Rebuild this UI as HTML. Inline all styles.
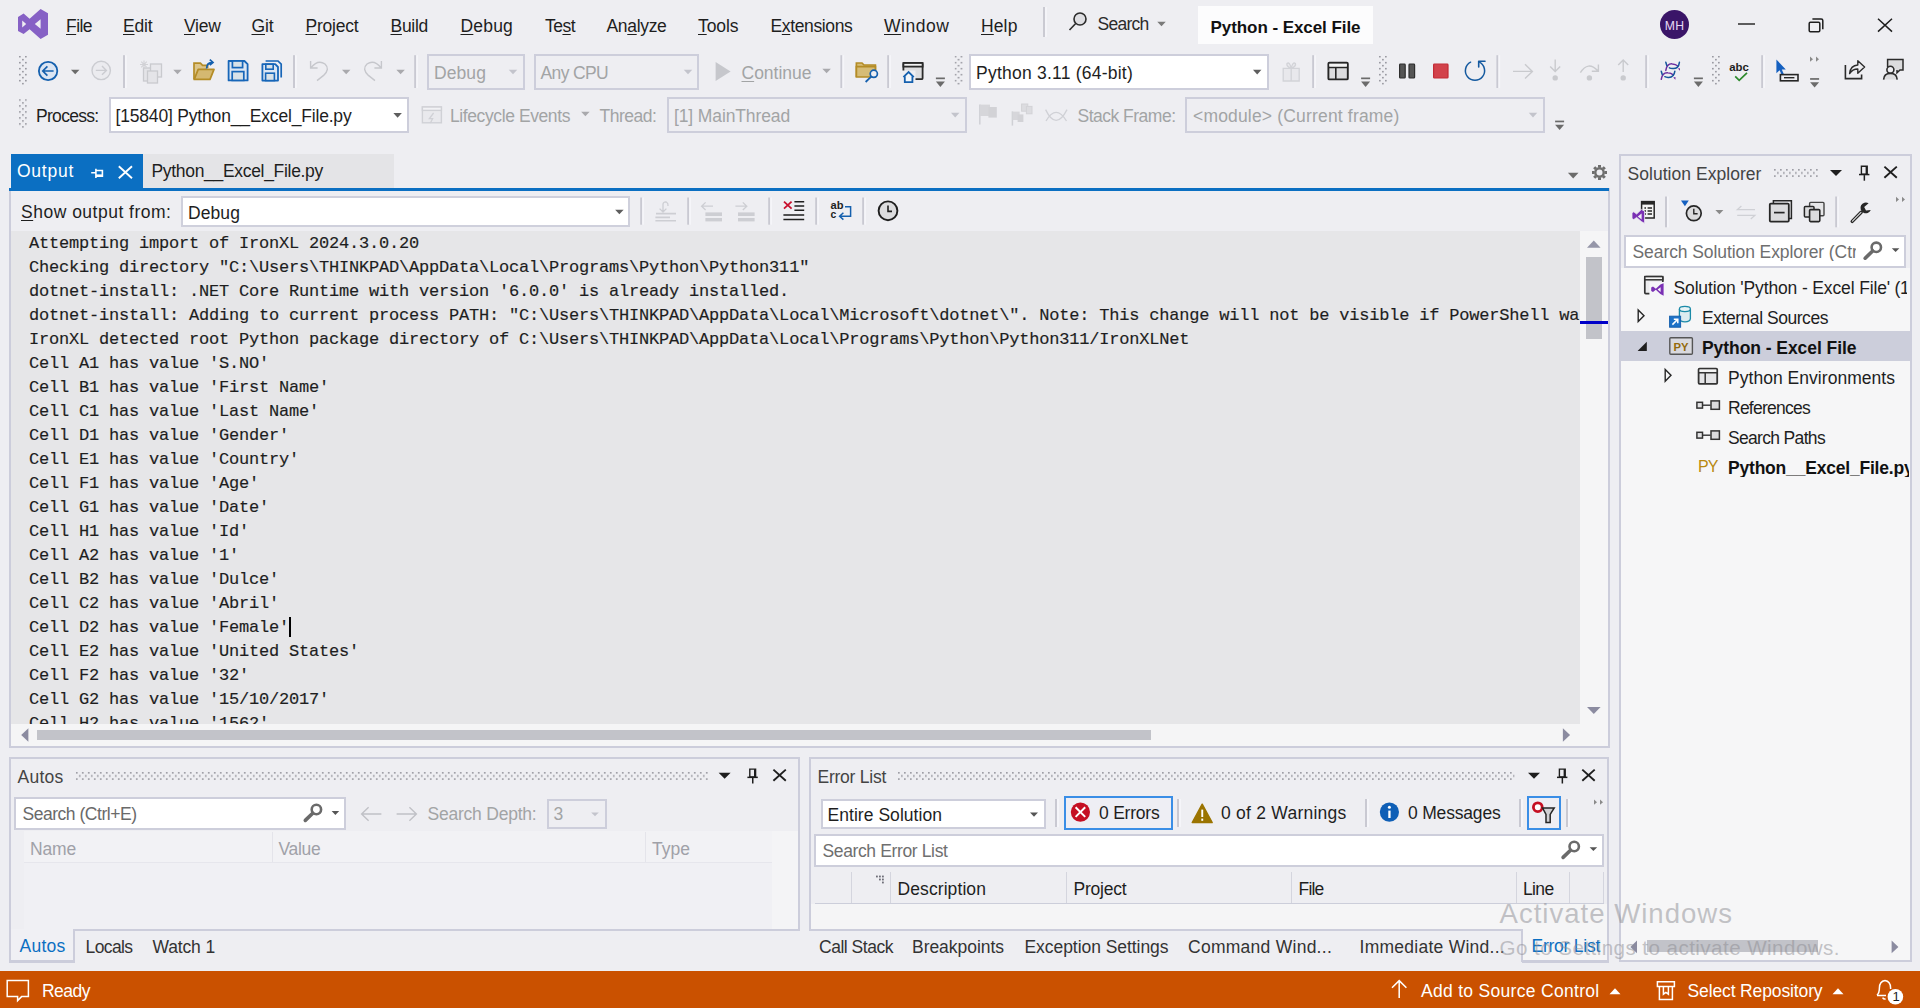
<!DOCTYPE html>
<html lang="en"><head><meta charset="utf-8"><title>Python - Excel File - Microsoft Visual Studio</title>
<style>
html,body{margin:0;padding:0;}
body{width:1920px;height:1008px;overflow:hidden;background:#eeeef2;position:relative;font-family:"Liberation Sans", sans-serif;}
.b{position:absolute;box-sizing:border-box;display:block;}
.t{position:absolute;white-space:pre;line-height:1;font-kerning:normal;}
u{text-decoration:underline;text-underline-offset:2px;text-decoration-thickness:1px;}
</style></head><body>
<div class="b" style="left:1043px;top:7px;width:2px;height:30px;background:#cacad2;"></div>
<div class="b" style="left:1045px;top:7px;width:2px;height:30px;background:#f4f4f8;"></div>
<div class="b" style="left:1198px;top:6px;width:175px;height:38px;background:#fcfcfd;"></div>
<div class="b" style="left:1659.8px;top:9.5px;width:29.6px;height:29.6px;border-radius:15px;background:#3a1568;"></div>
<div class="b" style="left:427px;top:54px;width:98px;height:36px;background:#eeeef2;border:2px solid #cdcedb;"></div>
<div class="b" style="left:534px;top:54px;width:165px;height:36px;background:#eeeef2;border:2px solid #cdcedb;"></div>
<div class="b" style="left:969px;top:54px;width:300px;height:36px;background:#fff;border:2px solid #cdcedb;"></div>
<div class="b" style="left:109px;top:97px;width:300px;height:36px;background:#fff;border:2px solid #cdcedb;"></div>
<div class="b" style="left:667px;top:97px;width:300px;height:36px;background:#eeeef2;border:2px solid #cdcedb;"></div>
<div class="b" style="left:1185px;top:97px;width:360px;height:36px;background:#eeeef2;border:2px solid #cdcedb;"></div>
<div class="b" style="left:9px;top:188px;width:1601px;height:560px;background:#eeeef2;border:2px solid #cccddb;"></div>
<div class="b" style="left:11px;top:154px;width:132px;height:35px;background:#0b6fc2;"></div>
<div class="b" style="left:143px;top:154px;width:251px;height:34px;background:#e4e4e7;"></div>
<div class="b" style="left:9px;top:188px;width:1600px;height:3px;background:#0b6fc2;"></div>
<div class="b" style="left:181px;top:196px;width:449px;height:31px;background:#fff;border:2px solid #cfd0dc;"></div>
<div class="b" style="left:11px;top:231px;width:1569px;height:493px;background:#e6e6e8;"></div>
<div class="b" style="left:11px;top:231px;width:1569px;height:493px;overflow:hidden;"><div style="position:absolute;left:18px;top:1px;font-family:'Liberation Mono', monospace;font-size:17px;letter-spacing:-0.2px;-webkit-text-stroke:0.16px #1e1e1e;line-height:24px;white-space:pre;color:#1e1e1e;"><div style="height:24px;">Attempting import of IronXL 2024.3.0.20</div><div style="height:24px;">Checking directory "C:\Users\THINKPAD\AppData\Local\Programs\Python\Python311"</div><div style="height:24px;">dotnet-install: .NET Core Runtime with version '6.0.0' is already installed.</div><div style="height:24px;">dotnet-install: Adding to current process PATH: "C:\Users\THINKPAD\AppData\Local\Microsoft\dotnet\". Note: This change will not be visible if PowerShell wa</div><div style="height:24px;">IronXL detected root Python package directory of C:\Users\THINKPAD\AppData\Local\Programs\Python\Python311/IronXLNet</div><div style="height:24px;">Cell A1 has value 'S.NO'</div><div style="height:24px;">Cell B1 has value 'First Name'</div><div style="height:24px;">Cell C1 has value 'Last Name'</div><div style="height:24px;">Cell D1 has value 'Gender'</div><div style="height:24px;">Cell E1 has value 'Country'</div><div style="height:24px;">Cell F1 has value 'Age'</div><div style="height:24px;">Cell G1 has value 'Date'</div><div style="height:24px;">Cell H1 has value 'Id'</div><div style="height:24px;">Cell A2 has value '1'</div><div style="height:24px;">Cell B2 has value 'Dulce'</div><div style="height:24px;">Cell C2 has value 'Abril'</div><div style="height:24px;">Cell D2 has value 'Female'</div><div style="height:24px;">Cell E2 has value 'United States'</div><div style="height:24px;">Cell F2 has value '32'</div><div style="height:24px;">Cell G2 has value '15/10/2017'</div><div style="height:24px;">Cell H2 has value '1562'</div></div></div>
<div class="b" style="left:289px;top:617px;width:1.5px;height:20px;background:#000;"></div>
<div class="b" style="left:1580px;top:231px;width:28px;height:493px;background:#f5f5f6;"></div>
<div class="b" style="left:1586px;top:257px;width:16px;height:82px;background:#c2c3c9;"></div>
<div class="b" style="left:1580px;top:321px;width:28px;height:3px;background:#0000c8;"></div>
<div class="b" style="left:11px;top:724px;width:1597px;height:22px;background:#f5f5f6;"></div>
<div class="b" style="left:37px;top:730px;width:1114px;height:10px;background:#c2c3c9;"></div>
<div class="b" style="left:9px;top:757px;width:791px;height:206px;border:2px solid #cccddb;"></div>
<div class="b" style="left:11px;top:831px;width:787px;height:98px;background:#f0f0f4;"></div>
<div class="b" style="left:9px;top:929px;width:791px;height:2px;background:#cccddb;"></div>
<div class="b" style="left:14px;top:797px;width:332px;height:33px;background:#fff;border:2px solid #cdcedb;"></div>
<div class="b" style="left:547px;top:799px;width:60px;height:30px;background:#eeeef2;border:2px solid #cdcedb;"></div>
<div class="b" style="left:11px;top:831px;width:13px;height:98px;background:#eeeef2;"></div>
<div class="b" style="left:24px;top:831px;width:748px;height:31px;background:#f2f2f5;"></div>
<div class="b" style="left:24px;top:862px;width:748px;height:1px;background:#e6e6ec;"></div>
<div class="b" style="left:272px;top:832px;width:1px;height:30px;background:#e4e4ea;"></div>
<div class="b" style="left:645px;top:832px;width:1px;height:30px;background:#e4e4ea;"></div>
<div class="b" style="left:772px;top:831px;width:26px;height:98px;background:#f4f4f6;"></div>
<div class="b" style="left:75px;top:931px;width:727px;height:33px;background:#eeeef2;"></div>
<div class="b" style="left:798px;top:931px;width:3px;height:33px;background:#eeeef2;"></div>
<div class="b" style="left:9px;top:929px;width:66px;height:33px;background:#f0f0f4;border:2px solid #cccddb;border-top:none;"></div>
<div class="b" style="left:809px;top:757px;width:800px;height:206px;border:2px solid #cccddb;"></div>
<div class="b" style="left:811px;top:904px;width:796px;height:25px;background:#f5f5f6;"></div>
<div class="b" style="left:809px;top:929px;width:800px;height:2px;background:#cccddb;"></div>
<div class="b" style="left:821px;top:799px;width:225px;height:30px;background:#fff;border:2px solid #cdcedb;"></div>
<div class="b" style="left:1055px;top:799px;width:2px;height:28px;background:#c9c9d2;"></div>
<div class="b" style="left:1057px;top:799px;width:2px;height:28px;background:#f5f5f9;"></div>
<div class="b" style="left:1064px;top:796px;width:109px;height:34px;background:#eeeef4;border:2px solid #3a8ee6;"></div>
<div class="b" style="left:1177px;top:799px;width:2px;height:28px;background:#c9c9d2;"></div>
<div class="b" style="left:1179px;top:799px;width:2px;height:28px;background:#f5f5f9;"></div>
<div class="b" style="left:1365px;top:799px;width:2px;height:28px;background:#c9c9d2;"></div>
<div class="b" style="left:1367px;top:799px;width:2px;height:28px;background:#f5f5f9;"></div>
<div class="b" style="left:1519px;top:799px;width:2px;height:28px;background:#c9c9d2;"></div>
<div class="b" style="left:1521px;top:799px;width:2px;height:28px;background:#f5f5f9;"></div>
<div class="b" style="left:1527px;top:796px;width:34px;height:34px;background:#eeeef4;border:2px solid #3a8ee6;"></div>
<div class="b" style="left:1566px;top:799px;width:2px;height:28px;background:#c9c9d2;"></div>
<div class="b" style="left:1568px;top:799px;width:2px;height:28px;background:#f5f5f9;"></div>
<div class="b" style="left:814px;top:834px;width:790px;height:33px;background:#fff;border:2px solid #cdcedb;"></div>
<div class="b" style="left:815px;top:903px;width:789px;height:1px;background:#ccceda;"></div>
<div class="b" style="left:851px;top:872px;width:1px;height:31px;background:#d4d5de;"></div>
<div class="b" style="left:890px;top:872px;width:1px;height:31px;background:#d4d5de;"></div>
<div class="b" style="left:1066px;top:872px;width:1px;height:31px;background:#d4d5de;"></div>
<div class="b" style="left:1291px;top:872px;width:1px;height:31px;background:#d4d5de;"></div>
<div class="b" style="left:1516px;top:872px;width:1px;height:31px;background:#d4d5de;"></div>
<div class="b" style="left:1569px;top:872px;width:1px;height:31px;background:#d4d5de;"></div>
<div class="b" style="left:1603px;top:872px;width:1px;height:31px;background:#d4d5de;"></div>
<div class="b" style="left:808px;top:931px;width:714px;height:33px;background:#eeeef2;"></div>
<div class="b" style="left:1521px;top:929px;width:88px;height:33px;background:#f5f5f6;border:2px solid #cccddb;border-top:none;"></div>
<div class="b" style="left:1521px;top:929px;width:2px;height:2px;background:#cccddb;"></div>
<div class="b" style="left:1619px;top:154px;width:293px;height:808px;background:#f6f6f7;border:2px solid #cccddb;"></div>
<div class="b" style="left:1621px;top:156px;width:289px;height:112px;background:#eeeef2;"></div>
<div class="b" style="left:1624px;top:235px;width:282px;height:33px;background:#fff;border:2px solid #cdcedb;"></div>
<div class="b" style="left:1621px;top:331px;width:289px;height:30px;background:#cccedb;"></div>
<div class="b" style="left:1647px;top:940px;width:171px;height:12px;background:#c2c3c9;"></div>
<div class="b" style="left:0px;top:971px;width:1920px;height:37px;background:#ca5100;"></div>
<svg class="b" style="left:0;top:0;" width="1920" height="1008" viewBox="0 0 1920 1008"><defs><pattern id="g0" width="6" height="6" patternUnits="userSpaceOnUse" x="19" y="55.9"><rect x="0" y="0" width="1.7" height="1.5" fill="#96969e"/><rect x="3.05" y="3" width="1.7" height="1.5" fill="#96969e"/></pattern><pattern id="g1" width="6" height="6" patternUnits="userSpaceOnUse" x="954.6" y="55.9"><rect x="0" y="0" width="1.7" height="1.5" fill="#96969e"/><rect x="3.05" y="3" width="1.7" height="1.5" fill="#96969e"/></pattern><pattern id="g2" width="6" height="6" patternUnits="userSpaceOnUse" x="1379" y="55.9"><rect x="0" y="0" width="1.7" height="1.5" fill="#96969e"/><rect x="3.05" y="3" width="1.7" height="1.5" fill="#96969e"/></pattern><pattern id="g3" width="6" height="6" patternUnits="userSpaceOnUse" x="1712" y="55.9"><rect x="0" y="0" width="1.7" height="1.5" fill="#96969e"/><rect x="3.05" y="3" width="1.7" height="1.5" fill="#96969e"/></pattern><pattern id="g4" width="6" height="6" patternUnits="userSpaceOnUse" x="19" y="99.2"><rect x="0" y="0" width="1.7" height="1.5" fill="#96969e"/><rect x="3.05" y="3" width="1.7" height="1.5" fill="#96969e"/></pattern><pattern id="g5" width="6" height="6.4" patternUnits="userSpaceOnUse" x="75.9" y="771.9"><rect x="0" y="0" width="1.7" height="1.7" fill="#9c9ca4"/><rect x="3" y="3.2" width="1.7" height="1.7" fill="#9c9ca4"/></pattern><pattern id="g6" width="6" height="6.4" patternUnits="userSpaceOnUse" x="898" y="771.9"><rect x="0" y="0" width="1.7" height="1.7" fill="#9c9ca4"/><rect x="3" y="3.2" width="1.7" height="1.7" fill="#9c9ca4"/></pattern><pattern id="g7" width="6" height="6.4" patternUnits="userSpaceOnUse" x="1774" y="168.9"><rect x="0" y="0" width="1.7" height="1.7" fill="#9c9ca4"/><rect x="3" y="3.2" width="1.7" height="1.7" fill="#9c9ca4"/></pattern></defs>
<path d="M40.6 9L48 13.2V34.8L40.6 39L29.6 29.2L23.6 34L18 31V17L23.6 13.6L29.6 18.8Z" fill="#8661c5" />
<path d="M40.6 19.2V28.8L34.8 24Z M22.2 20.6V27.6L26.2 24Z" fill="#eeeef2" />
<circle cx="1080" cy="19" r="6" fill="#dedee2" stroke="#2b2b2b" stroke-width="1.6"/>
<path d="M1075.7 23.5L1069.5 30" fill="none" stroke="#2b2b2b" stroke-width="1.6" />
<path d="M1157.25 21.7H1165.75L1161.5 26.3Z" fill="#7a7a7a" />
<rect x="1738" y="23.3" width="17" height="1.4" fill="#1e1e1e" />
<rect x="1809.2" y="22.2" width="10.6" height="9.6" fill="none" stroke="#1e1e1e" stroke-width="1.5" rx="1.2" />
<path d="M1812.4 19.0H1821.2Q1822.8 19.0 1822.8 20.6V29.2" fill="none" stroke="#1e1e1e" stroke-width="1.5" />
<path d="M1878 18.8L1892 31.6M1892 18.8L1878 31.6" fill="none" stroke="#1e1e1e" stroke-width="1.5" />
<rect x="19" y="55.9" width="8.2" height="29" fill="url(#g0)" />
<circle cx="48.1" cy="71" r="9.2" fill="#dbe5f3" stroke="#1560ae" stroke-width="1.8"/>
<path d="M53.6 71H43.2M47.4 66.4L42.8 71L47.4 75.6" fill="none" stroke="#1560ae" stroke-width="1.7" />
<path d="M70.95 69.65H79.45L75.2 74.35Z" fill="#6b6b6b" />
<circle cx="101.2" cy="70.4" r="9.2" fill="#ebebef" stroke="#cbccd1" stroke-width="1.4"/>
<path d="M95.8 70.4H106M102 66L106.4 70.4L102 74.8" fill="none" stroke="#cbccd1" stroke-width="1.4" />
<rect x="123.0" y="55.2" width="2" height="32.8" fill="#c9c9d2" />
<rect x="125.0" y="55.2" width="1.8" height="32.8" fill="#f5f5f9" />
<rect x="143.5" y="68" width="10" height="13" fill="#e4e4e8" stroke="#c9cace" stroke-width="1.3" />
<rect x="150.5" y="64" width="11" height="13" fill="#e8e8ec" stroke="#c9cace" stroke-width="1.3" />
<rect x="147.5" y="71" width="10" height="12" fill="#e4e4e8" stroke="#c9cace" stroke-width="1.3" />
<path d="M144 60.5V68.5M140 64.5H148M141.2 61.7L146.8 67.3M146.8 61.7L141.2 67.3" fill="none" stroke="#d2d2d6" stroke-width="1.1" />
<path d="M173.25 69.65H181.75L177.5 74.35Z" fill="#a9a9ad" />
<path d="M194 79.2V63.2H200.4L202.6 65.4H207.6V68" fill="#dcc58a" stroke="#b48c26" stroke-width="1.7" />
<path d="M194.2 79.4L198.2 69.4H214L210 79.4Z" fill="#d4b871" stroke="#b48c26" stroke-width="1.7" stroke-linejoin="round"/>
<path d="M206.6 68.4Q206.6 62.6 212.6 62.4M209.8 59.6L213 62.4L209.8 65.2" fill="none" stroke="#1560ae" stroke-width="1.7" />
<path d="M228.6 61H244.4L247.6 64.2V80.4H228.6Z" fill="#dbe6f4" stroke="#1766b8" stroke-width="1.8" stroke-linejoin="round"/>
<rect x="232.4" y="61" width="10.2" height="6.6" fill="#d9e2e8" stroke="#1766b8" stroke-width="1.7" />
<rect x="232.2" y="71.6" width="11.6" height="8.8" fill="#d9e2e8" stroke="#1766b8" stroke-width="1.7" />
<path d="M265.6 61H278L281.2 64.2V77.6" fill="none" stroke="#1766b8" stroke-width="1.7" />
<path d="M262.4 64.2H275.2L278 67V80.6H262.4Z" fill="#dbe6f4" stroke="#1766b8" stroke-width="1.8" stroke-linejoin="round"/>
<rect x="265.8" y="64.2" width="7.4" height="5" fill="#d9e2e8" stroke="#1766b8" stroke-width="1.6" />
<rect x="265.6" y="73.2" width="8.8" height="7.4" fill="#d9e2e8" stroke="#1766b8" stroke-width="1.6" />
<rect x="293.0" y="55.2" width="2" height="32.8" fill="#c9c9d2" />
<rect x="295.0" y="55.2" width="1.8" height="32.8" fill="#f5f5f9" />
<path d="M310.6 61V68H317.6M311 67.6Q318 59 325 64Q330.4 69 323.6 75.4L317 80.6" fill="none" stroke="#c6c7cc" stroke-width="1.4" />
<path d="M341.95 69.65H350.45L346.2 74.35Z" fill="#a9a9ad" />
<path d="M381.4 61V68H374.4M381 67.6Q374 59 367 64Q361.6 69 368.4 75.4L375 80.6" fill="none" stroke="#c6c7cc" stroke-width="1.4" />
<path d="M396.35 69.65H404.85L400.6 74.35Z" fill="#a9a9ad" />
<rect x="414.2" y="55.2" width="2" height="32.8" fill="#c9c9d2" />
<rect x="416.2" y="55.2" width="1.8" height="32.8" fill="#f5f5f9" />
<path d="M508.75 69.65H517.25L513 74.35Z" fill="#c3c4cc" />
<path d="M683.75 69.65H692.25L688 74.35Z" fill="#c3c4cc" />
<path d="M715.6 62L730.6 71.5L715.6 81Z" fill="#c6c7cc" />
<path d="M822.35 68.65H830.85L826.6 73.35Z" fill="#a9a9ad" />
<rect x="840.4000000000001" y="55.2" width="2" height="32.8" fill="#c9c9d2" />
<rect x="842.4000000000001" y="55.2" width="1.8" height="32.8" fill="#f5f5f9" />
<path d="M856.4 77V63H862L864 65H875.4V70" fill="#d6bc76" stroke="#b48c26" stroke-width="1.7" />
<path d="M856.4 66.6H875.4V77H856.4Z" fill="#d6bc76" stroke="#b48c26" stroke-width="1.7" />
<circle cx="873.8" cy="73.8" r="3.6" fill="#eeeef2" stroke="#1560ae" stroke-width="1.7"/>
<path d="M871.2 76.6L865.6 82" fill="none" stroke="#1560ae" stroke-width="1.8" />
<rect x="887.2" y="55.2" width="2" height="32.8" fill="#c9c9d2" />
<rect x="889.2" y="55.2" width="1.8" height="32.8" fill="#f5f5f9" />
<rect x="903.4" y="63" width="19.2" height="16.2" fill="#dedee0" stroke="#2b2b2b" stroke-width="1.8" rx="1" />
<rect x="903.4" y="63" width="19.2" height="3.6" fill="#f4f4f4" stroke="#2b2b2b" stroke-width="1.8" />
<rect x="901.5" y="70.5" width="14" height="13.5" fill="#eeeef2" />
<path d="M903.4 77.2L908.6 72L913.8 77.2M904.8 76.4V82.2H912.4V76.4" fill="#f4f8fc" stroke="#1560ae" stroke-width="1.8" />
<rect x="935.9" y="77.5" width="9" height="1.7" fill="#6b6b6b" />
<path d="M935.9 81.6H944.9L940.4 86.89999999999999Z" fill="#6b6b6b" />
<rect x="954.6" y="55.9" width="8.2" height="29" fill="url(#g1)" />
<path d="M1252.95 69.85000000000001H1261.45L1257.2 74.55Z" fill="#5e5e5e" />
<path d="M1283.2 68.4H1299.2V81H1283.2ZM1291.2 68.4V81M1291.2 68.2Q1286 66.4 1287 63.4Q1289.6 61.4 1291.2 68.2Q1292.8 61.4 1295.4 63.4Q1296.4 66.4 1291.2 68.2" fill="#e8e8ec" stroke="#d2d3d8" stroke-width="1.3" />
<rect x="1312.2" y="55.2" width="2" height="32.8" fill="#c9c9d2" />
<rect x="1314.2" y="55.2" width="1.8" height="32.8" fill="#f5f5f9" />
<rect x="1328.4" y="62.8" width="19.4" height="16.6" fill="#dcdcde" stroke="#262626" stroke-width="1.9" rx="1" />
<path d="M1328.4 67.4H1347.8M1335.8 67.4V79.4" fill="none" stroke="#262626" stroke-width="1.6" />
<rect x="1329.4" y="63.8" width="17.4" height="2.8" fill="#f4f4f4" />
<rect x="1361.1" y="77.5" width="9" height="1.7" fill="#6b6b6b" />
<path d="M1361.1 81.6H1370.1L1365.6 86.89999999999999Z" fill="#6b6b6b" />
<rect x="1379" y="55.9" width="8.2" height="29" fill="url(#g2)" />
<rect x="1399.6" y="64.2" width="5.6" height="13.8" fill="#555" stroke="#2e2e2e" stroke-width="1.2" rx="0.8" />
<rect x="1409" y="64.2" width="5.6" height="13.8" fill="#555" stroke="#2e2e2e" stroke-width="1.2" rx="0.8" />
<rect x="1433.6" y="64.2" width="14.4" height="13.8" fill="#d2424b" stroke="#c32a35" stroke-width="1.2" rx="0.8" />
<path d="M1470.6 62.2A9.6 9.6 0 1 0 1479.4 62.2" fill="none" stroke="#14599f" stroke-width="1.5" stroke-linecap="round"/>
<path d="M1485 61.3H1478.7V67" fill="none" stroke="#14599f" stroke-width="1.6" stroke-linecap="round" stroke-linejoin="round"/>
<rect x="1496.4" y="55.2" width="2" height="32.8" fill="#c9c9d2" />
<rect x="1498.4" y="55.2" width="1.8" height="32.8" fill="#f5f5f9" />
<path d="M1513 71.4H1532M1525 64.2L1532.4 71.4L1525 78.6" fill="none" stroke="#c9cace" stroke-width="1.4" />
<path d="M1555.2 59.4V71.2M1550.2 66.4L1555.2 71.4L1560.2 66.4" fill="none" stroke="#c9cace" stroke-width="1.4" />
<circle cx="1555.2" cy="77.9" r="2.7" fill="#c9cace"/>
<path d="M1580.4 72.6Q1588 60.6 1597.6 70.6M1598.4 64.6V71.2H1591.8" fill="none" stroke="#c9cace" stroke-width="1.4" />
<circle cx="1589.4" cy="77.9" r="2.7" fill="#c9cace"/>
<path d="M1623.2 72V60.2M1618.2 65L1623.2 60L1628.2 65" fill="none" stroke="#c9cace" stroke-width="1.4" />
<circle cx="1623.2" cy="77.9" r="2.7" fill="#c9cace"/>
<rect x="1645.2" y="55.2" width="2" height="32.8" fill="#c9c9d2" />
<rect x="1647.2" y="55.2" width="1.8" height="32.8" fill="#f5f5f9" />
<g transform="translate(0 0)">
<path d="M1665.8 70.4Q1667 63.4 1672.4 63.9Q1675.6 64.1 1677.8 66" fill="none" stroke="#6b2fa0" stroke-width="1.5" stroke-linecap="round"/>
<path d="M1665.8 62.3L1666.8 65.6M1679.4 62.3Q1678.6 68.9 1672.6 68.5Q1670.6 68.4 1669.4 67.8" fill="none" stroke="#15559c" stroke-width="1.5" stroke-linecap="round"/>
<path d="M1677.8 68.6L1680 68.2L1680 70.8Z" fill="#6b2fa0" />
</g>
<g transform="translate(-4.55 8.9)">
<path d="M1665.8 70.4Q1667 63.4 1672.4 63.9Q1675.6 64.1 1677.8 66" fill="none" stroke="#6b2fa0" stroke-width="1.5" stroke-linecap="round"/>
<path d="M1665.8 62.3L1666.8 65.6M1679.4 62.3Q1678.6 68.9 1672.6 68.5Q1670.6 68.4 1669.4 67.8" fill="none" stroke="#15559c" stroke-width="1.5" stroke-linecap="round"/>
<path d="M1677.8 68.6L1680 68.2L1680 70.8Z" fill="#6b2fa0" />
</g>
<rect x="1693.9" y="77.5" width="9" height="1.7" fill="#6b6b6b" />
<path d="M1693.9 81.6H1702.9L1698.4 86.89999999999999Z" fill="#6b6b6b" />
<rect x="1712" y="55.9" width="8.2" height="29" fill="url(#g3)" />
<text x="1729.2" y="70.8" font-family="Liberation Sans, sans-serif" font-weight="700" font-size="10.8" fill="#1e1e1e" textLength="19.6" lengthAdjust="spacingAndGlyphs">abc</text>
<path d="M1735.2 76.4L1739.2 80.4L1747 72.8" fill="none" stroke="#2d8a2d" stroke-width="1.7" />
<rect x="1761.2" y="55.2" width="2" height="32.8" fill="#c9c9d2" />
<rect x="1763.2" y="55.2" width="1.8" height="32.8" fill="#f5f5f9" />
<path d="M1776.4 59.6V73.2L1779.6 70.2L1782 75.4L1784 74.4L1781.8 69.4H1785.8Z" fill="#1560c0" />
<rect x="1780.4" y="74.6" width="17.6" height="6.2" fill="#eeeef2" stroke="#262626" stroke-width="1.6" />
<rect x="1784" y="77" width="10.4" height="1.4" fill="#262626" />
<path d="M1810 56.6L1813 59.2L1810 61.800000000000004Z M1816 56.6L1819 59.2L1816 61.800000000000004Z" fill="#8a8a8a" />
<rect x="1810.1" y="78.10000000000001" width="9" height="1.7" fill="#6b6b6b" />
<path d="M1810.1 82.2H1819.1L1814.6 87.5Z" fill="#6b6b6b" />
<path d="M1845.4 65V78.6H1861.6V74.6" fill="none" stroke="#2b2b2b" stroke-width="1.6" />
<path d="M1849.6 73.6Q1850.4 65.4 1857.8 65V60.8L1864.6 67L1857.8 73.2V69Q1852.4 69 1849.6 73.6Z" fill="none" stroke="#2b2b2b" stroke-width="1.4" stroke-linejoin="round"/>
<path d="M1887.6 67V59.4H1903V70H1900L1897 72.8V70" fill="#dcdcde" stroke="#2b2b2b" stroke-width="1.5" />
<circle cx="1890.4" cy="69.8" r="3.5" fill="#eeeef2" stroke="#2b2b2b" stroke-width="1.6"/>
<path d="M1883.6 79.6Q1884 73.4 1890.4 73.4Q1896.8 73.4 1897.2 79.6" fill="#dcdcde" stroke="#2b2b2b" stroke-width="1.6" />
<rect x="19" y="99.2" width="8.2" height="29" fill="url(#g4)" />
<path d="M393.35 113.05000000000001H401.85L397.6 117.75Z" fill="#5e5e5e" />
<rect x="422.4" y="107" width="19" height="15.8" fill="#e9e9ed" stroke="#d0d1d6" stroke-width="1.4" />
<rect x="422.4" y="107" width="19" height="3.4" fill="#f2f2f5" stroke="#d0d1d6" stroke-width="1.4" />
<path d="M433.6 113L429.4 118.6H432.6L430.4 123" fill="none" stroke="#d0d1d6" stroke-width="1.3" />
<path d="M581.15 111.65H589.65L585.4 116.35Z" fill="#a9a9ad" />
<path d="M950.95 112.85000000000001H959.45L955.2 117.55Z" fill="#c3c4cc" />
<path d="M979.8 104.4V124.4" fill="none" stroke="#cfd0d5" stroke-width="1.5" />
<rect x="980" y="104.6" width="10" height="11.4" fill="#d6d6da" />
<rect x="988.4" y="107" width="8.4" height="10.6" fill="#d2d2d6" />
<path d="M1012.4 111.4V125.6" fill="none" stroke="#cfd0d5" stroke-width="1.5" />
<rect x="1012.6" y="111.6" width="7" height="8.4" fill="#d6d6da" />
<rect x="1017.6" y="114.4" width="5.8" height="7.6" fill="#d2d2d6" />
<rect x="1021.6" y="104" width="6.2" height="7.2" fill="#dcdce0" stroke="#d2d2d6" stroke-width="1" />
<rect x="1026.4" y="106.4" width="5.6" height="7.4" fill="#dcdce0" stroke="#d2d2d6" stroke-width="1" />
<path d="M1045.6 109.6Q1056 131.2 1067 109.6M1046 121Q1056 103.6 1066.5 121" fill="none" stroke="#d0d1d6" stroke-width="1.3" />
<path d="M1528.75 112.85000000000001H1537.25L1533 117.55Z" fill="#c3c4cc" />
<rect x="1555.1" y="120.60000000000001" width="9" height="1.7" fill="#6b6b6b" />
<path d="M1555.1 124.7H1564.1L1559.6 130.0Z" fill="#6b6b6b" />
<path d="M91.2 172.8H95.8M95.9 168.8V178M96 170.5H102.4V176.2H96" fill="none" stroke="#fff" stroke-width="1.6" />
<rect x="96" y="174.4" width="6.8" height="2.2" fill="#fff" />
<path d="M118.80000000000001 166.2L132.0 178.2M132.0 166.2L118.80000000000001 178.2" fill="none" stroke="#fff" stroke-width="1.9" />
<path d="M1567.9 172.7H1578.5L1573.2 178.5Z" fill="#6b6b6b" />
<g transform="translate(1599.5 172.5)"><circle r="4.2" fill="none" stroke="#6e6e6e" stroke-width="2.4"/><rect x="-1.5" y="-7.5" width="3" height="2.6" fill="#6e6e6e" transform="rotate(0)"/><rect x="-1.5" y="-7.5" width="3" height="2.6" fill="#6e6e6e" transform="rotate(45)"/><rect x="-1.5" y="-7.5" width="3" height="2.6" fill="#6e6e6e" transform="rotate(90)"/><rect x="-1.5" y="-7.5" width="3" height="2.6" fill="#6e6e6e" transform="rotate(135)"/><rect x="-1.5" y="-7.5" width="3" height="2.6" fill="#6e6e6e" transform="rotate(180)"/><rect x="-1.5" y="-7.5" width="3" height="2.6" fill="#6e6e6e" transform="rotate(225)"/><rect x="-1.5" y="-7.5" width="3" height="2.6" fill="#6e6e6e" transform="rotate(270)"/><rect x="-1.5" y="-7.5" width="3" height="2.6" fill="#6e6e6e" transform="rotate(315)"/><circle r="1.9" fill="#eeeef2"/></g>
<path d="M615.15 209.65H623.65L619.4 214.35Z" fill="#5e5e5e" />
<rect x="640.2" y="197.5" width="2" height="27.19999999999999" fill="#c9c9d2" />
<rect x="642.2" y="197.5" width="1.8" height="27.19999999999999" fill="#f5f5f9" />
<rect x="687.2" y="197.5" width="2" height="27.19999999999999" fill="#c9c9d2" />
<rect x="689.2" y="197.5" width="1.8" height="27.19999999999999" fill="#f5f5f9" />
<rect x="768.2" y="197.5" width="2" height="27.19999999999999" fill="#c9c9d2" />
<rect x="770.2" y="197.5" width="1.8" height="27.19999999999999" fill="#f5f5f9" />
<rect x="815.2" y="197.5" width="2" height="27.19999999999999" fill="#c9c9d2" />
<rect x="817.2" y="197.5" width="1.8" height="27.19999999999999" fill="#f5f5f9" />
<rect x="862.2" y="197.5" width="2" height="27.19999999999999" fill="#c9c9d2" />
<rect x="864.2" y="197.5" width="1.8" height="27.19999999999999" fill="#f5f5f9" />
<path d="M656 213.6H676M655.4 217.4H670M655.4 220.8H676" fill="none" stroke="#cdced3" stroke-width="1.6" />
<path d="M663 212V204Q663.6 201.4 666.6 202.2Q668.4 203.2 668 206M659.6 208.6L663 212L666.4 208.6" fill="none" stroke="#cdced3" stroke-width="1.3" />
<path d="M701.6 206.2H713M705.6 202.4L701.6 206.2L705.6 210" fill="none" stroke="#cdced3" stroke-width="1.3" />
<rect x="705.4" y="212.4" width="16.6" height="3.6" fill="#cdced3" />
<rect x="705.4" y="218" width="16.6" height="3.4" fill="#cdced3" />
<path d="M735.4 206.2H746.6M742.8 202.4L746.8 206.2L742.8 210" fill="none" stroke="#cdced3" stroke-width="1.3" />
<rect x="738" y="212.4" width="16.6" height="3.6" fill="#cdced3" />
<rect x="738" y="218" width="16.6" height="3.4" fill="#cdced3" />
<path d="M784 201.6L791.6 208.6M791.6 201.6L784 208.6" fill="none" stroke="#c8102e" stroke-width="1.8" />
<path d="M794.4 201.8H804.2M794.4 206H804.2M794.4 210.2H804.2M783.4 215H804.2M783.4 219.6H804.2" fill="none" stroke="#1e1e1e" stroke-width="1.5" />
<text x="830.6" y="208.8" font-family="Liberation Sans, sans-serif" font-weight="700" font-size="10.4" fill="#1e1e1e" textLength="13" lengthAdjust="spacingAndGlyphs">ab</text>
<text x="830.6" y="218.2" font-family="Liberation Sans, sans-serif" font-weight="700" font-size="10.4" fill="#1e1e1e">c</text>
<path d="M845 206.8H850.6V216.2H840M843.4 212.8L839.6 216.2L843.4 219.6" fill="none" stroke="#1560ae" stroke-width="1.5" />
<circle cx="888" cy="210.8" r="9.4" fill="#dcdcde" stroke="#1e1e1e" stroke-width="1.9"/>
<path d="M888 205.4V211.4H892" fill="none" stroke="#1e1e1e" stroke-width="1.6" />
<path d="M1587 247.8H1600.6L1593.8 240.6Z" fill="#9596a8" />
<path d="M1587 707H1600.6L1593.8 714Z" fill="#8b8ba0" />
<path d="M28.4 728.2V741.8L21.2 735Z" fill="#8b8ba0" />
<path d="M1562.9 728.2V741.8L1570.1 735Z" fill="#8b8ba0" />
<rect x="75.9" y="771.9" width="632.1" height="8.2" fill="url(#g5)" />
<path d="M718.6 772.8H730.6L724.6 778.8Z" fill="#1e1e1e" />
<path d="M749.8 769.1H755.6V777.0H749.8Z" fill="none" stroke="#1e1e1e" stroke-width="1.4" />
<rect x="754.0" y="769.1" width="1.6" height="7.9" fill="#1e1e1e" />
<rect x="747.4" y="776.6" width="10.4" height="1.5" fill="#1e1e1e" />
<rect x="752.0" y="777.9" width="1.5" height="5.6" fill="#1e1e1e" />
<path d="M773.4 769.6L785.8000000000001 780.8000000000001M785.8000000000001 769.6L773.4 780.8000000000001" fill="none" stroke="#1e1e1e" stroke-width="1.9" />
<circle cx="316.4" cy="809.5" r="4.7" fill="none" stroke="#6a6a6a" stroke-width="2.6"/>
<path d="M312.7 813.2L305.3 820.4" fill="none" stroke="#6a6a6a" stroke-width="3.6" stroke-linecap="round"/>
<path d="M331.59999999999997 811.1H339.2L335.4 814.9Z" fill="#555" />
<path d="M381.4 814H362M368.6 807.2L361.6 814L368.6 820.8" fill="none" stroke="#c0c1c6" stroke-width="1.4" />
<path d="M396.6 814H416M409.4 807.2L416.4 814L409.4 820.8" fill="none" stroke="#c0c1c6" stroke-width="1.4" />
<path d="M591.2 812.5H598.8L595 816.3Z" fill="#c3c4cc" />
<rect x="898" y="771.9" width="616.5999999999999" height="8.2" fill="url(#g6)" />
<path d="M1528.0 772.8H1540.0L1534 778.8Z" fill="#1e1e1e" />
<path d="M1559.4 769.1H1565.2V777.0H1559.4Z" fill="none" stroke="#1e1e1e" stroke-width="1.4" />
<rect x="1563.6" y="769.1" width="1.6" height="7.9" fill="#1e1e1e" />
<rect x="1557" y="776.6" width="10.4" height="1.5" fill="#1e1e1e" />
<rect x="1561.6" y="777.9" width="1.5" height="5.6" fill="#1e1e1e" />
<path d="M1582.3 769.6L1594.7 780.8000000000001M1594.7 769.6L1582.3 780.8000000000001" fill="none" stroke="#1e1e1e" stroke-width="1.9" />
<path d="M1030.0 812.5H1038.0L1034 816.7Z" fill="#555" />
<circle cx="1080.4" cy="812.1" r="9.6" fill="#c50f23"/>
<path d="M1075.6 807.3L1085.2 816.9M1085.2 807.3L1075.6 816.9" fill="none" stroke="#fff" stroke-width="2" />
<path d="M1202.2 804.2L1212.2 822.6H1192.2Z" fill="#9b7400" stroke="#9b7400" stroke-width="1.4" stroke-linejoin="round"/>
<rect x="1201.3" y="809.6" width="1.9" height="7.4" fill="#fff" />
<rect x="1201.3" y="818.6" width="1.9" height="2.2" fill="#fff" />
<circle cx="1389.4" cy="812.1" r="9.6" fill="#0f5fb6"/>
<rect x="1388.3" y="810.6" width="2.3" height="7.4" fill="#fff" />
<circle cx="1389.4" cy="807.2" r="1.5" fill="#fff"/>
<circle cx="1537.8" cy="807.2" r="4.4" fill="#fff" stroke="#c50f23" stroke-width="2.8"/>
<path d="M1542.6 808H1554.2L1550.2 814.4V822.6H1546V814.4Z" fill="#d0d0d4" stroke="#262626" stroke-width="1.5" />
<rect x="1540.6" y="804" width="4.8" height="7" fill="#eef1f8" opacity="0"/>
<path d="M1594 799.6L1597 802.2L1594 804.8000000000001Z M1600 799.6L1603 802.2L1600 804.8000000000001Z" fill="#8a8a8a" />
<circle cx="1574.2" cy="846.5" r="4.7" fill="none" stroke="#6a6a6a" stroke-width="2.6"/>
<path d="M1570.5 850.2L1563.1 857.4" fill="none" stroke="#6a6a6a" stroke-width="3.6" stroke-linecap="round"/>
<path d="M1589.6000000000001 847.3000000000001H1597.2L1593.4 851.1Z" fill="#555" />
<rect x="876" y="875.6" width="1.8" height="1.8" fill="#6e6e78" />
<rect x="879" y="875.6" width="1.8" height="1.8" fill="#6e6e78" />
<rect x="882" y="875.6" width="1.8" height="1.8" fill="#6e6e78" />
<rect x="879" y="878.6" width="1.8" height="1.8" fill="#6e6e78" />
<rect x="882" y="878.6" width="1.8" height="1.8" fill="#6e6e78" />
<rect x="882" y="881.6" width="1.8" height="1.8" fill="#6e6e78" />
<rect x="1774" y="168.9" width="44.40000000000009" height="8.2" fill="url(#g7)" />
<path d="M1830.0 170.0H1842.0L1836 176.0Z" fill="#1e1e1e" />
<path d="M1861.4 166.29999999999998H1867.2V174.2H1861.4Z" fill="none" stroke="#1e1e1e" stroke-width="1.4" />
<rect x="1865.6" y="166.29999999999998" width="1.6" height="7.9" fill="#1e1e1e" />
<rect x="1859" y="173.79999999999998" width="10.4" height="1.5" fill="#1e1e1e" />
<rect x="1863.6" y="175.1" width="1.5" height="5.6" fill="#1e1e1e" />
<path d="M1884.3999999999999 166.6L1896.8 177.79999999999998M1896.8 166.6L1884.3999999999999 177.79999999999998" fill="none" stroke="#1e1e1e" stroke-width="1.9" />
<rect x="1641.6" y="201.6" width="12.6" height="16.4" fill="#f4f4f4" stroke="#262626" stroke-width="1.5" />
<rect x="1641.6" y="201.6" width="12.6" height="3" fill="#262626" />
<path d="M1644.4 208H1646M1647.6 208H1652M1644.4 211H1646M1647.6 211H1652M1644.4 214H1646M1647.6 214H1652" fill="none" stroke="#262626" stroke-width="1.3" />
<path d="M1644.6 211.2V223.4L1641.4 221.6L1636.6 217.4L1633.8 219.6L1632 218.6V212.8L1633.8 211.8L1636.6 214L1641.4 209.4Z" fill="#7a30b4" stroke="#eeeef2" stroke-width="0.8" />
<path d="M1641.6 213.6V219.6L1637.8 216.6Z" fill="#f0f0f4" />
<rect x="1665.0" y="196.5" width="2" height="30.80000000000001" fill="#c9c9d2" />
<rect x="1667.0" y="196.5" width="1.8" height="30.80000000000001" fill="#f5f5f9" />
<path d="M1681 200.4H1688.8L1684.9 206.2Z" fill="#1560c0" />
<circle cx="1693.8" cy="213.3" r="7.4" fill="#dcdcde" stroke="#262626" stroke-width="1.7"/>
<path d="M1693.8 208.8V213.8H1697.6" fill="none" stroke="#262626" stroke-width="1.4" />
<path d="M1715.4 210.1H1723.4L1719.4 214.29999999999998Z" fill="#8a8a8a" />
<path d="M1755 209.6H1737.4L1741.4 206M1737.2 215.4H1754.8L1750.8 219" fill="none" stroke="#cfd0d5" stroke-width="1.3" />
<path d="M1773.4 203.2V200.8H1791.4V218.6H1789" fill="none" stroke="#262626" stroke-width="1.5" />
<rect x="1769.8" y="203.6" width="19" height="18" fill="#dcdcde" stroke="#262626" stroke-width="1.8" rx="1" />
<path d="M1774 212.6H1784.6" fill="none" stroke="#262626" stroke-width="1.7" />
<rect x="1809.6" y="202.4" width="14.4" height="13.4" fill="#e6e6e8" stroke="#444" stroke-width="1.4" rx="1" />
<rect x="1804.4" y="206.4" width="9.6" height="10.6" fill="#dcdcde" stroke="#262626" stroke-width="1.5" rx="1" />
<rect x="1809.6" y="209.6" width="10.2" height="12" fill="#dcdcde" stroke="#262626" stroke-width="1.6" rx="1" />
<rect x="1835.2" y="196.5" width="2" height="30.80000000000001" fill="#c9c9d2" />
<rect x="1837.2" y="196.5" width="1.8" height="30.80000000000001" fill="#f5f5f9" />
<path d="M1852.2 221.4L1861.2 212.2" fill="none" stroke="#262626" stroke-width="3.4" stroke-linecap="round"/>
<path d="M1852.4 221.2L1861 212.4" fill="none" stroke="#dcdcde" stroke-width="1.1" stroke-linecap="round"/>
<path d="M1868.6 203.2A5.4 5.4 0 1 0 1870.8 210L1866 210.4L1864.2 207Z" fill="#262626" />
<path d="M1896 196.8L1899 199.4L1896 202.0Z M1902 196.8L1905 199.4L1902 202.0Z" fill="#8a8a8a" />
<circle cx="1876.3000000000002" cy="247.3" r="4.7" fill="none" stroke="#6a6a6a" stroke-width="2.6"/>
<path d="M1872.6000000000001 251.0L1865.2 258.2" fill="none" stroke="#6a6a6a" stroke-width="3.6" stroke-linecap="round"/>
<path d="M1891.8 248.29999999999998H1899.3999999999999L1895.6 252.1Z" fill="#555" />
<rect x="1644.8" y="276.6" width="18" height="17" fill="#ececee" stroke="#333" stroke-width="1.7" rx="1" />
<rect x="1644.8" y="276.6" width="18" height="3.2" fill="#f6f6f6" stroke="#333" stroke-width="1.5" />
<rect x="1649.4" y="282" width="17" height="15" fill="#f5f5f8" />
<path d="M1663.6 283.2V295.8L1660.4 294L1655.8 289.8L1653 292L1651.2 291V287.6L1653 286.6L1655.8 288.8L1660.4 284.6Z" fill="#7a30b4" />
<path d="M1660.6 287.2V292L1657.6 289.6Z" fill="#f5f5f8" />
<path d="M1638.2 310V321.6L1644 315.8Z" fill="none" stroke="#262626" stroke-width="1.4" />
<path d="M1679.4 309V318.6Q1680 321.8 1685 321.8Q1690 321.8 1690.4 318.6V309" fill="#dcebf0" stroke="#1b8aa8" stroke-width="1.3" />
<ellipse cx="1684.9" cy="309" rx="5.5" ry="2.6" fill="#e8f3f6" stroke="#1b8aa8" stroke-width="1.3"/>
<rect x="1669.6" y="316.2" width="11" height="11" fill="#1e73c8" stroke="#1560ae" stroke-width="1" />
<path d="M1672.4 324.6L1677.6 319.4M1673.8 319.2H1677.8V323.2" fill="none" stroke="#fff" stroke-width="1.5" />
<path d="M1637.6 351H1646.8V341.8Z" fill="#1e1e1e" />
<rect x="1669.8" y="337.8" width="22.6" height="16.4" fill="#d9d9de" stroke="#555" stroke-width="1.4" rx="1" />
<text x="1673.4" y="350.6" font-family="Liberation Sans, sans-serif" font-weight="700" font-size="11.6" fill="#94690a" textLength="15" lengthAdjust="spacingAndGlyphs">PY</text>
<path d="M1665.2 369.4V381.2L1671 375.3Z" fill="none" stroke="#262626" stroke-width="1.4" />
<rect x="1698.6" y="368.6" width="18.6" height="15.2" fill="#e4e4e6" stroke="#333" stroke-width="1.8" rx="1" />
<path d="M1698.6 372.8H1717.2M1705.2 372.8V383.8" fill="none" stroke="#333" stroke-width="1.5" />
<rect x="1699.6" y="369.6" width="16.6" height="2.2" fill="#f4f4f4" />
<rect x="1696.9" y="402.3" width="5.6" height="5.8" fill="#e2e2e4" stroke="#333" stroke-width="1.5" />
<path d="M1702.6 405.2H1710.6" fill="none" stroke="#333" stroke-width="1.4" />
<rect x="1711" y="400.9" width="8.4" height="8.4" fill="#dcdcde" stroke="#333" stroke-width="1.5" />
<rect x="1696.9" y="432.3" width="5.6" height="5.8" fill="#e2e2e4" stroke="#333" stroke-width="1.5" />
<path d="M1702.6 435.2H1710.6" fill="none" stroke="#333" stroke-width="1.4" />
<rect x="1711" y="430.9" width="8.4" height="8.4" fill="#dcdcde" stroke="#333" stroke-width="1.5" />
<path d="M1637 940.6V953.2L1630.4 946.9Z" fill="#8b8ba0" />
<path d="M1891.6 940.6V953.2L1898.4 946.9Z" fill="#8b8ba0" />
<path d="M7.2 980.4H28.4V996.6H21.6L17.6 1000.6V996.6H7.2Z" fill="none" stroke="#fff" stroke-width="1.5" />
<path d="M1399.2 998V980.6M1392 987.8L1399.2 980.6L1406.4 987.8" fill="none" stroke="#fff" stroke-width="1.5" />
<path d="M1609.5 994.2H1620.5L1615 988.2Z" fill="#fff" />
<path d="M1832.5 994.2H1843.5L1838 988.2Z" fill="#fff" />
<path d="M1657.4 981.8H1674.4V986.6H1657.4ZM1659.4 986.6V999.4H1672.4V986.6M1663.4 986.8V994.2L1665.9 992.4L1668.4 994.2V986.8" fill="none" stroke="#fff" stroke-width="1.5" />
<path d="M1877 995.2Q1879.4 993 1879.4 988Q1879.6 981.4 1885 980.6Q1890.4 981.4 1890.6 988V989" fill="none" stroke="#fff" stroke-width="1.5" />
<path d="M1877 995.4H1886M1882.6 997.6Q1883.6 999.4 1885.6 999" fill="none" stroke="#fff" stroke-width="1.5" />
<circle cx="1895.4" cy="996.8" r="7.8" fill="#fff"/>
<text x="1892.4" y="1001.4" font-family="Liberation Sans, sans-serif" font-size="13" fill="#1e1e1e">1</text>
</svg>
<span class="t" style="left:66px;top:18.19px;font-size:17.5px;color:#1e1e1e;letter-spacing:-0.555px;"><u>F</u>ile</span>
<span class="t" style="left:123px;top:18.19px;font-size:17.5px;color:#1e1e1e;letter-spacing:-0.168px;"><u>E</u>dit</span>
<span class="t" style="left:184px;top:18.19px;font-size:17.5px;color:#1e1e1e;letter-spacing:-0.281px;"><u>V</u>iew</span>
<span class="t" style="left:251.5px;top:18.19px;font-size:17.5px;color:#1e1e1e;letter-spacing:-0.125px;"><u>G</u>it</span>
<span class="t" style="left:305.5px;top:18.19px;font-size:17.5px;color:#1e1e1e;letter-spacing:-0.212px;"><u>P</u>roject</span>
<span class="t" style="left:390.5px;top:18.19px;font-size:17.5px;color:#1e1e1e;letter-spacing:-0.287px;"><u>B</u>uild</span>
<span class="t" style="left:460.5px;top:18.19px;font-size:17.5px;color:#1e1e1e;letter-spacing:0.184px;"><u>D</u>ebug</span>
<span class="t" style="left:545px;top:18.19px;font-size:17.5px;color:#1e1e1e;letter-spacing:-0.527px;">Te<u>s</u>t</span>
<span class="t" style="left:606.5px;top:18.19px;font-size:17.5px;color:#1e1e1e;letter-spacing:-0.324px;">An<u>a</u>lyze</span>
<span class="t" style="left:698px;top:18.19px;font-size:17.5px;color:#1e1e1e;letter-spacing:-0.072px;"><u>T</u>ools</span>
<span class="t" style="left:770.5px;top:18.19px;font-size:17.5px;color:#1e1e1e;letter-spacing:-0.362px;">E<u>x</u>tensions</span>
<span class="t" style="left:884px;top:18.19px;font-size:17.5px;color:#1e1e1e;letter-spacing:0.539px;"><u>W</u>indow</span>
<span class="t" style="left:981px;top:18.19px;font-size:17.5px;color:#1e1e1e;letter-spacing:0.125px;"><u>H</u>elp</span>
<span class="t" style="left:1097.5px;top:16.19px;font-size:17.5px;color:#2b2b2b;letter-spacing:-0.742px;">Search</span>
<span class="t" style="left:1210.5px;top:18.61px;font-size:17px;color:#111;font-weight:700;letter-spacing:-0.061px;">Python - Excel File</span>
<span class="t" style="left:1664.8px;top:19.57px;font-size:12.2px;color:#e6d8f4;letter-spacing:0.416px;">MH</span>
<span class="t" style="left:434px;top:65.19px;font-size:17.5px;color:#a2a4a5;letter-spacing:0.084px;">Debug</span>
<span class="t" style="left:540.5px;top:65.19px;font-size:17.5px;color:#a2a4a5;letter-spacing:-0.638px;">Any CPU</span>
<span class="t" style="left:741.5px;top:65.19px;font-size:17.5px;color:#a2a4a5;letter-spacing:-0.008px;"><u>C</u>ontinue</span>
<span class="t" style="left:976px;top:65.19px;font-size:17.5px;color:#1e1e1e;letter-spacing:0.230px;">Python 3.11 (64-bit)</span>
<span class="t" style="left:36px;top:108.19px;font-size:17.5px;color:#1e1e1e;letter-spacing:-0.697px;">Process:</span>
<span class="t" style="left:115.5px;top:108.19px;font-size:17.5px;color:#1e1e1e;letter-spacing:-0.182px;">[15840] Python__Excel_File.py</span>
<span class="t" style="left:450px;top:107.79px;font-size:17.5px;color:#a2a4a5;letter-spacing:-0.403px;">Lifecycle Events</span>
<span class="t" style="left:599.5px;top:108.19px;font-size:17.5px;color:#a2a4a5;letter-spacing:-0.473px;">Thread:</span>
<span class="t" style="left:674px;top:108.19px;font-size:17.5px;color:#a2a4a5;letter-spacing:-0.122px;">[1] MainThread</span>
<span class="t" style="left:1077.5px;top:108.19px;font-size:17.5px;color:#a2a4a5;letter-spacing:-0.505px;">Stack Frame:</span>
<span class="t" style="left:1193px;top:108.19px;font-size:17.5px;color:#a2a4a5;letter-spacing:0.174px;">&lt;module&gt; (Current frame)</span>
<span class="t" style="left:17px;top:163.19px;font-size:17.5px;color:#fff;letter-spacing:0.742px;">Output</span>
<span class="t" style="left:151.5px;top:162.89px;font-size:17.5px;color:#1e1e1e;letter-spacing:-0.311px;">Python__Excel_File.py</span>
<span class="t" style="left:21px;top:203.69px;font-size:17.5px;color:#1e1e1e;letter-spacing:0.497px;"><u>S</u>how output from:</span>
<span class="t" style="left:188px;top:205.39px;font-size:17.5px;color:#1e1e1e;letter-spacing:0.084px;">Debug</span>
<span class="t" style="left:17.5px;top:768.99px;font-size:17.5px;color:#444;letter-spacing:0.250px;">Autos</span>
<span class="t" style="left:22.5px;top:805.89px;font-size:17.5px;color:#6a6a6a;letter-spacing:-0.472px;">Search (Ctrl+E)</span>
<span class="t" style="left:427.5px;top:805.89px;font-size:17.5px;color:#a2a4a5;letter-spacing:-0.221px;">Search Depth:</span>
<span class="t" style="left:553.5px;top:805.89px;font-size:17.5px;color:#a2a4a5;">3</span>
<span class="t" style="left:30px;top:840.99px;font-size:17.5px;color:#a0a1a8;letter-spacing:-0.172px;">Name</span>
<span class="t" style="left:278.5px;top:840.99px;font-size:17.5px;color:#a0a1a8;letter-spacing:-0.294px;">Value</span>
<span class="t" style="left:652px;top:840.99px;font-size:17.5px;color:#a0a1a8;letter-spacing:0.012px;">Type</span>
<span class="t" style="left:19.5px;top:937.69px;font-size:17.5px;color:#0b6fc2;letter-spacing:0.250px;">Autos</span>
<span class="t" style="left:85.5px;top:938.69px;font-size:17.5px;color:#333;letter-spacing:-0.599px;">Locals</span>
<span class="t" style="left:152.5px;top:938.69px;font-size:17.5px;color:#333;letter-spacing:-0.150px;">Watch 1</span>
<span class="t" style="left:817.5px;top:768.99px;font-size:17.5px;color:#444;letter-spacing:-0.248px;">Error List</span>
<span class="t" style="left:827.5px;top:807.19px;font-size:17.5px;color:#1e1e1e;letter-spacing:0.045px;">Entire Solution</span>
<span class="t" style="left:1099px;top:805.19px;font-size:17.5px;color:#1e1e1e;letter-spacing:-0.217px;">0 Errors</span>
<span class="t" style="left:1221px;top:805.19px;font-size:17.5px;color:#1e1e1e;letter-spacing:0.239px;">0 of 2 Warnings</span>
<span class="t" style="left:1408px;top:805.19px;font-size:17.5px;color:#1e1e1e;letter-spacing:-0.186px;">0 Messages</span>
<span class="t" style="left:822.5px;top:842.69px;font-size:17.5px;color:#6f6f6f;letter-spacing:-0.370px;">Search Error List</span>
<span class="t" style="left:897.5px;top:880.59px;font-size:17.5px;color:#1e1e1e;letter-spacing:0.087px;">Description</span>
<span class="t" style="left:1073.5px;top:880.59px;font-size:17.5px;color:#1e1e1e;letter-spacing:-0.210px;">Project</span>
<span class="t" style="left:1298.5px;top:880.59px;font-size:17.5px;color:#1e1e1e;letter-spacing:-0.801px;">File</span>
<span class="t" style="left:1523px;top:880.59px;font-size:17.5px;color:#1e1e1e;letter-spacing:-0.648px;">Line</span>
<span class="t" style="left:819px;top:938.69px;font-size:17.5px;color:#333;letter-spacing:-0.478px;">Call Stack</span>
<span class="t" style="left:912px;top:938.69px;font-size:17.5px;color:#333;letter-spacing:-0.038px;">Breakpoints</span>
<span class="t" style="left:1024.5px;top:938.69px;font-size:17.5px;color:#333;letter-spacing:-0.053px;">Exception Settings</span>
<span class="t" style="left:1188px;top:938.69px;font-size:17.5px;color:#333;letter-spacing:0.264px;">Command Wind...</span>
<span class="t" style="left:1359.5px;top:938.69px;font-size:17.5px;color:#333;letter-spacing:0.263px;">Immediate Wind...</span>
<span class="t" style="left:1531.5px;top:937.69px;font-size:17.5px;color:#0b6fc2;letter-spacing:-0.248px;">Error List</span>
<span class="t" style="left:1627.5px;top:165.59px;font-size:17.5px;color:#444;letter-spacing:0.042px;">Solution Explorer</span>
<span class="t" style="left:1632.5px;top:243.99px;font-size:17.5px;color:#6f6f6f;letter-spacing:-0.083px;max-width:223px;overflow:hidden;">Search Solution Explorer (Ctrl</span>
<span class="t" style="left:1673.5px;top:280.19px;font-size:17.5px;color:#1e1e1e;letter-spacing:-0.140px;">Solution 'Python - Excel File'</span>
<span class="t" style="left:1890px;top:280.19px;font-size:17.5px;color:#1e1e1e;letter-spacing:-0.3px;width:17px;overflow:hidden;"> (1 of 1 project)</span>
<span class="t" style="left:1702px;top:309.79px;font-size:17.5px;color:#1e1e1e;letter-spacing:-0.454px;">External Sources</span>
<span class="t" style="left:1702px;top:339.99px;font-size:17.5px;color:#111;font-weight:700;letter-spacing:-0.058px;">Python - Excel File</span>
<span class="t" style="left:1728px;top:369.79px;font-size:17.5px;color:#1e1e1e;letter-spacing:0.035px;">Python Environments</span>
<span class="t" style="left:1728px;top:399.79px;font-size:17.5px;color:#1e1e1e;letter-spacing:-0.750px;">References</span>
<span class="t" style="left:1728px;top:429.79px;font-size:17.5px;color:#1e1e1e;letter-spacing:-0.672px;">Search Paths</span>
<span class="t" style="left:1728px;top:459.99px;font-size:17.5px;color:#111;font-weight:700;letter-spacing:-0.2px;width:181px;overflow:hidden;">Python__Excel_File.py</span>
<span class="t" style="left:1698px;top:459.26px;font-size:16px;color:#b8890f;letter-spacing:-0.972px;">PY</span>
<span class="t" style="left:1499.5px;top:899.94px;font-size:27.6px;color:rgba(140,140,146,0.5);letter-spacing:0.983px;">Activate Windows</span>
<span class="t" style="left:1499.5px;top:938.16px;font-size:20.6px;color:rgba(140,140,146,0.5);letter-spacing:0.441px;">Go to Settings to activate Windows.</span>
<span class="t" style="left:42px;top:982.79px;font-size:17.5px;color:#fff;letter-spacing:-0.519px;">Ready</span>
<span class="t" style="left:1421px;top:982.79px;font-size:17.5px;color:#fff;letter-spacing:0.301px;">Add to Source Control</span>
<span class="t" style="left:1687.5px;top:982.79px;font-size:17.5px;color:#fff;letter-spacing:-0.127px;">Select Repository</span>
</body></html>
